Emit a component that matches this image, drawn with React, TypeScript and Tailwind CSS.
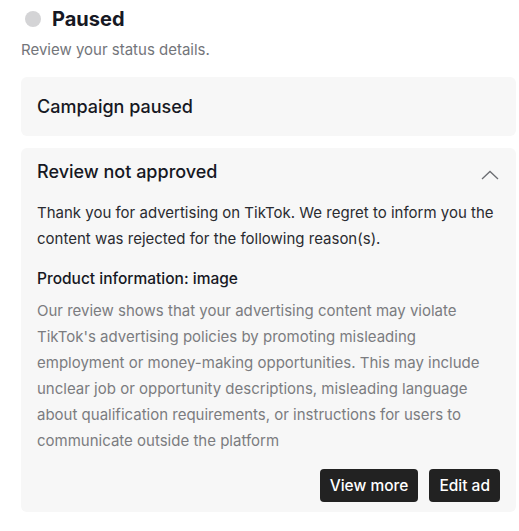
import React from 'react';

export default function App() {
  return (
    <div className="min-h-screen bg-white pl-[21px] pr-[3px] pt-[6px] font-['Inter','Liberation_Sans',sans-serif] text-[#161823]">
      {/* Status header */}
      <div className="flex items-center gap-[11px] pl-[4px]">
        <span className="h-4 w-4 rounded-full bg-[#d4d4d6]" />
        <h1 className="text-[20px] font-bold leading-[26px]">Paused</h1>
      </div>
      <p className="mt-[9px] text-[15px] leading-[18px] text-[#73757a]">Review your status details.</p>

      {/* Campaign card */}
      <div className="mt-[18px] flex h-[59px] items-center rounded-md bg-[#f7f7f7] px-4">
        <span className="text-[18px] font-medium">Campaign paused</span>
      </div>

      {/* Review card */}
      <div className="mt-3 rounded-md bg-[#f7f7f7] px-4 pt-3 pb-[10px]">
        <div className="flex items-center justify-between">
          <h2 className="text-[18px] font-medium leading-6">Review not approved</h2>
          <svg width="18" height="10" viewBox="0 0 18 10" fill="none" className="mr-[1px] mt-[6px]">
            <path d="M1 9 L9 1.5 L17 9" stroke="#6b6d72" strokeWidth="1.3" />
          </svg>
        </div>
        <p className="mt-4 text-[15px] leading-[26px] text-[#2a2b30]">
          Thank you for advertising on TikTok. We regret to inform you the content was rejected for the following reason(s).
        </p>
        <h3 className="mt-[15px] text-[15.5px] font-medium leading-6">Product information: image</h3>
        <p className="mt-[7px] text-[15px] leading-[26px] text-[#7b7c80]">
          Our review shows that your advertising content may violate TikTok's advertising policies by promoting misleading
          employment or money-making opportunities. This may include unclear job or opportunity descriptions, misleading
          language about qualification requirements, or instructions for users to communicate outside the platform
        </p>
        <div className="mt-[15px] flex justify-end gap-[11px]">
          <button className="h-[33px] rounded-[4px] bg-[#222222] px-[10px] text-[15.5px] font-medium text-white">View more</button>
          <button className="h-[33px] rounded-[4px] bg-[#222222] px-[10px] text-[15.5px] font-medium text-white">Edit ad</button>
        </div>
      </div>
    </div>
  );
}
